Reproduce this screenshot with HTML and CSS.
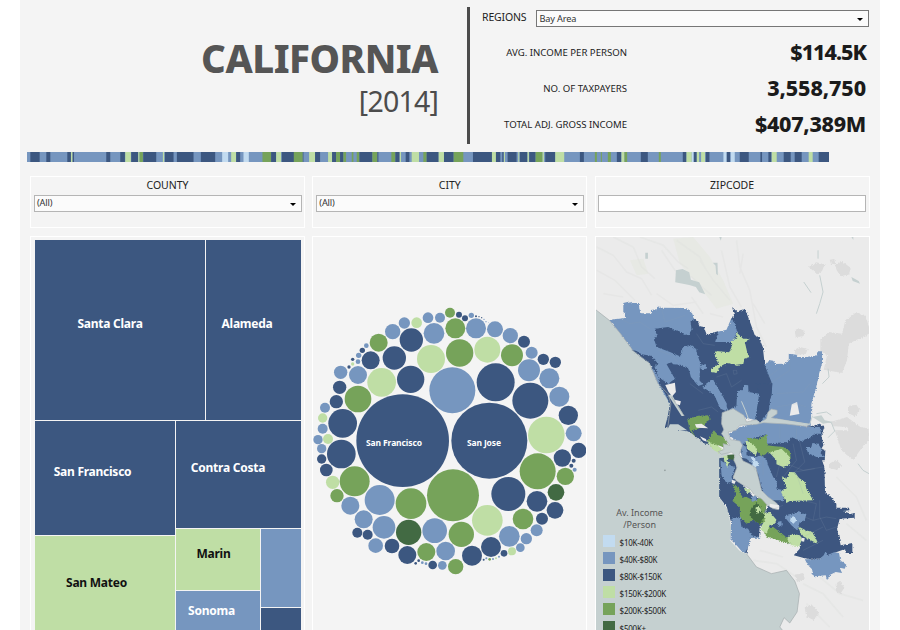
FILE: index.html
```html
<!DOCTYPE html>
<html lang="en">
<head>
<meta charset="utf-8">
<title>California income 2014</title>
<link rel="stylesheet" href="styles.css">
</head>
<body>
<main class="dashboard">
  <header class="header">
    <div class="title">
      <h1>CALIFORNIA</h1>
      <p>[2014]</p>
    </div>
    <div class="summary">
      <div class="region"><span class="region-label">REGIONS</span><div class="select select-dark">Bay Area</div></div>
      <dl class="stats">
        <div class="stat"><dt>AVG. INCOME PER PERSON</dt><dd class="average">$114.5K</dd></div>
        <div class="stat"><dt>NO. OF TAXPAYERS</dt><dd class="taxpayers">3,558,750</dd></div>
        <div class="stat"><dt>TOTAL ADJ. GROSS INCOME</dt><dd class="total">$407,389M</dd></div>
      </dl>
    </div>
  </header>

  <svg class="stripe" id="stripe" viewBox="20 0 2408 30" preserveAspectRatio="none"></svg>

  <section class="columns filters">
    <div class="panel filter"><h2>COUNTY</h2><div class="select">(All)</div></div>
    <div class="panel filter"><h2>CITY</h2><div class="select">(All)</div></div>
    <div class="panel filter"><h2>ZIPCODE</h2><div class="select input"></div></div>
  </section>

  <section class="columns charts">
    <div class="panel treemap">
      <div class="row row-top">
        <div class="tile dark santa-clara"><span>Santa Clara</span></div>
        <div class="tile dark grow alameda"><span>Alameda</span></div>
      </div>
      <div class="row grow">
        <div class="col col-left">
          <div class="tile dark san-francisco"><span>San Francisco</span></div>
          <div class="tile light grow san-mateo"><span>San Mateo</span></div>
        </div>
        <div class="col grow">
          <div class="tile dark contra-costa"><span>Contra Costa</span></div>
          <div class="row grow">
            <div class="col col-small">
              <div class="tile light marin"><span>Marin</span></div>
              <div class="tile mid grow sonoma"><span>Sonoma</span></div>
            </div>
            <div class="col grow">
              <div class="tile mid solano"></div>
              <div class="tile dark grow"></div>
            </div>
          </div>
        </div>
      </div>
    </div>

    <div class="panel bubbles">
      <svg viewBox="313 237 273 393" width="273" height="393">
        <g id="bubbles" transform="translate(310 300) scale(.333333)"></g>
        <text x="394" y="445.5" textLength="56">San Francisco</text>
        <text x="484" y="445.5" textLength="34">San Jose</text>
      </svg>
    </div>

    <div class="panel map">
      <svg viewBox="18 20 820 1179" width="273" height="393" preserveAspectRatio="none">
        <defs>
          <filter id="ragged" x="-2%" y="-2%" width="104%" height="104%">
            <feTurbulence type="turbulence" baseFrequency=".16" numOctaves="2" seed="4"/>
            <feDisplacementMap in="SourceGraphic" scale="4" xChannelSelector="R" yChannelSelector="G"/>
          </filter>
        </defs>
        <rect x="0" y="0" width="860" height="1220" fill="#ebebeb"/>
        <!-- relief shading -->
        <g fill="#e5e7df" opacity=".6"><path d="M250 25L310 20 360 80 400 150 430 220 380 235 330 170 270 100zM120 90L160 85 175 130 140 135z"/></g>
        <g class="relief">
          <path d="M20 50l50 25 40 50 45 20 30 50M70 20l60 30 25 60 40 35M20 120l55 30 60 60M150 20l70 25 45 50 30 20M215 60l40 60 50 20 60 55M40 190l60 10M200 190l50 35 70-10M330 90l40 60 50 60M395 60l25 110 35 60M440 30l10 80 30 70 20 110 30 60M460 70l-10 60M260 30l70 50 20 40M360 250l40 10M305 200l35 50M490 220l35 60"/>
          <path d="M510 960l70 20M490 990l70 10 60 40M640 1060l60 30 60 70M690 1040l60 50 70 20M740 740l60 60 30 70M650 1120l70 70M770 880l60 50"/>
        </g>
        <g fill="#dcdcdc" filter="url(#ragged)">
          <path d="M655 108l25-12 25 6-8 20-15 10zM720 88l14-2 2 12-12 4zM735 100l20-8 28 20-5 20-25 6-12-18zM615 300l12-6 18 8-5 16-22 2zM612 360l18-10 24 6-6 15-30 2z"/>
          <path d="M692 325L717 305 757 310 767 270 797 245 827 255 838 290 838 310 777 340 772 390 757 428 702 418 712 375 692 360z"/>
          <path d="M775 527l25-4 10 15-15 20-20-10zM722 575L772 560 812 590 837 595 837 630 812 650 797 625 772 590 730 588zM735 600L805 600 825 640 790 690 755 660zM718 700L740 688 755 703 740 718 718 713zM614 1033L640 1028 645 1045 622 1055zM738 1060l12-8 14 20-12 18-14-8zM645 1130l20-8 22 25-15 22-22-10z"/>
        </g>
        <g class="water">
          <path d="M10 238L17 238 58 270 90 308 130 362 178 398 204 460 234 490 243 520 233 595 290 595 345 635 395 660 430 675 430 740 388 800 415 840 425 900 420 930 450 962 470 970 500 1010 545 1030 590 1020 615 1052 629 1090 622 1145 600 1178 583 1162 570 1190 582 1204 10 1204z"/>
          <path d="M258 120L278 116 298 126 303 148 328 156 346 192 328 186 318 170 298 164 256 156zM166 67h8v18h-8zM387 17h9l-3 14zM369 97h14l1 38-5-4-2-25zM783 17h8v12zM785 140l22 12 4 8-22-8zM668 560L695 555 705 570 730 575 700 580z"/>
        </g>
        <path class="river" d="M685 60v25M690 135l10 50-10 35-10 30M642 155l22 32M715 415l3 25-20 20M680 550l30-5 15 10M700 572l25 5 10 25-20 20M805 700l15 20 18 10"/>

        <g filter="url(#ragged)">
        <!-- northern counties -->
        <polygon class="m-mid" points="57,268 105,263 105,249 100,245 100,218 122,213 127,218 146,218 151,249 183,249 183,239 199,237 204,226 213,232 285,233 305,244 314,268 330,286 350,312 410,298 425,262 520,390 527,402 537,389 550,391 557,401 580,400 597,388 597,370 620,373 625,380 650,380 680,375 684,363 697,363 697,398 688,430 680,468 665,520 663,588 600,578 515,574 460,560 395,600 290,600 235,590 240,520 204,460 178,398 130,362 90,308"/>
        <polygon class="m-dark" points="302,272 314,266 325,276 330,288 342,290 350,312 385,303 376,335 415,335 430,335 441,300 432,275 424,268 432,250 427,230 440,243 465,236 475,260 486,290 495,315 507,320 519,350 525,405 535,430 547,460 545,495 540,510 537,540 520,560 510,575 497,565 508,490 476,485 475,465 462,463 458,480 442,478 440,525 415,540 398,500 368,445 340,468 328,468 330,395 317,355 303,345 283,348 275,358 270,378 240,365 200,350 192,325 200,312 194,295 235,290 265,303 295,315 305,298"/>
        <polygon class="m-dark" points="125,358 140,362 155,372 182,376 205,400 193,404 205,440 235,460 255,445 230,402 243,395 250,402 275,404 303,415 325,462 370,490 412,540 395,560 402,600 400,640 345,640 300,605 225,590 233,560 240,520 226,490 208,462 205,440 178,398 150,378 130,362"/>
        <polygon class="m-mid" points="275,358 283,348 300,344 307,357 319,355 321,380 330,395 328,450 340,462 325,467 303,440 295,410 272,393"/>
        <polygon class="m-mid" points="328,403 345,402 351,415 333,417"/>
        <polygon class="m-mid" points="368,446 342,466 374,496 392,535 408,542 411,520 400,500"/>
        <polygon class="m-light" points="438,304 460,325 480,325 465,335 472,365 479,380 463,385 461,400 441,403 410,398 388,410 380,428 362,425 363,416 385,400 373,370 378,362 418,366 425,350 423,332 440,320"/>
        <polygon class="m-dark" points="498,458 548,459 545,493 540,510 535,545 510,575 496,565 510,500"/>

        <!-- east bay and south bay -->
        <polygon class="m-dark" points="430,600 663,588 690,580 704,590 695,615 701,645 695,655 707,660 705,690 697,690 704,710 706,785 720,795 740,820 740,832 779,832 779,840 760,842 782,850 795,848 795,862 750,865 742,895 753,945 788,938 788,968 768,968 766,956 700,980 690,985 650,985 612,975 630,955 630,942 600,940 540,915 510,885 525,850 540,810 515,790 490,720 455,670"/>
        <polygon class="m-dark" points="388,684 430,676 442,716 430,742 460,765 480,785 500,800 530,820 525,855 510,880 508,920 480,922 470,970 425,930 425,880 411,830 388,800"/>
        <polygon class="m-mid" points="415,612 450,590 520,572 600,575 650,590 690,590 695,610 670,610 660,620 635,633 605,620 590,635 530,640 525,612 500,620 478,625 455,645"/>
        <polygon class="m-mid" points="455,640 470,650 470,675 500,680 510,675 530,685 535,705 550,740 562,755 560,775 583,780 580,810 540,810 520,800 515,770 505,730 480,695 455,680"/>
        <polygon class="m-mid" points="648,650 665,650 668,638 685,640 695,655 693,670 707,680 680,680 655,668"/>
        <polygon class="m-mid" points="392,690 410,702 435,710 425,740 430,752 410,758 395,735"/>
        <polygon class="m-mid" points="425,862 450,860 455,890 475,895 485,915 508,920 508,922 480,922 475,950 465,968 455,962 440,945 422,925"/>
        <polygon class="m-mid" points="580,855 605,850 628,842 635,850 650,850 645,870 630,875 622,900 605,885"/>
        <polygon class="m-mid" points="645,987 690,985 702,975 708,962 712,975 733,966 748,968 752,990 770,1003 765,1015 750,1012 757,1028 738,1025 720,1034 712,1050 708,1035 675,1038 665,1030 670,1020 655,1005"/>
        <polygon class="m-green" points="292,565 325,556 357,555 359,568 348,575 342,590 305,600 318,622 300,600"/>
        <polygon class="m-green" points="358,620 372,600 385,615 400,618 418,650 405,652 385,645 370,655 350,630"/>
        <polygon class="m-green" points="470,622 505,625 530,611 532,645 555,648 580,650 600,662 603,685 590,690 570,670 540,668 532,677 515,678 495,655"/>
        <polygon class="m-green" points="428,762 447,770 452,790 470,800 490,810 520,800 531,822 522,850 530,875 510,880 490,868 470,880 450,860 450,830 428,812 437,790"/>
        <polygon class="m-green" points="522,890 550,890 570,905 602,930 600,940 525,917"/>
        <polygon class="m-light" points="466,628 480,636 495,645 502,665 498,675 472,655"/>
        <polygon class="m-light" points="538,666 575,655 600,680 598,702 580,710 560,702 560,690"/>
        <polygon class="m-light" points="576,738 590,745 598,725 615,726 628,743 645,755 650,775 670,810 600,812 590,818 574,785 588,770"/>
        <polygon class="m-light" points="350,630 385,647 402,660 392,670 372,660"/>
        <polygon class="m-light" points="462,772 480,776 482,785 470,790"/>
        <polygon class="m-light" points="520,847 540,845 560,868 555,880 540,883 530,910 510,895 525,870"/>
        <polygon class="m-light" points="625,888 648,900 668,905 684,940 660,928 635,915"/>
        <polygon class="m-light" points="590,920 605,910 630,915 638,925 628,948 605,945 597,935"/>
        <polygon class="m-light" points="400,677 420,675 418,695 412,710 404,695"/>
        <polygon class="m-dark" points="410,690 425,680 435,695 422,702"/>
        <polygon class="m-dark" points="452,770 465,785 480,790 460,802 448,785"/>
        <polygon class="m-forest" points="478,850 485,832 500,815 512,828 510,840 525,855 510,880 490,868"/>
        <polygon class="m-forest" points="412,675 434,672 433,688 415,685"/>
        <polygon class="m-light" points="497,832 507,826 512,840 500,848"/>
        <polygon class="m-pale" points="483,680 495,681 498,693 509,698 495,714 483,710 490,700"/>
        <polygon class="m-pale" points="603,860 613,858 621,870 611,880 601,872"/>
        <polygon class="m-dark" points="448,680 470,685 484,697 476,703 450,690"/>
        <polygon class="m-dark" points="515,675 535,665 542,675 530,685"/>
        <polygon class="m-mid" points="482,800 500,795 500,808 488,815"/>
        <polygon class="m-mid" points="562,875 575,872 576,885 566,890"/>
        </g>

        <!-- bays -->
        <polygon class="water shore" points="397,547 430,535 462,555 470,575 500,568 510,578 530,565 535,545 545,536 562,540 562,550 545,562 600,572 660,582 650,588 590,581 520,577 500,582 450,585 438,600 415,605 422,628 450,632 458,645 448,672 460,692 478,700 498,712 508,750 515,780 535,800 560,818 568,828 566,838 550,835 530,822 515,805 495,795 480,775 462,765 440,752 430,740 442,710 432,690 435,675 425,665 395,672 385,664 402,658 400,640 420,645 410,630 395,610 402,598 395,580"/>
        <path class="river" d="M455 513l12 28 10 28M515 575l45-8 100 15 8-25"/>
        <polygon class="water" points="235,495 275,557 283,557 245,492"/>
        <polygon class="water" points="240,582 265,582 292,600 232,600"/>
        <g fill="#ebebeb">
          <path d="M226 464L255 457 258 485 247 498 236 485zM255 508l18 5-3 12-12-4zM600 556L606 522 622 515 629 551zM315 582L335 580 355 594 320 592zM330 618l18 8 3 8-12-4zM540 820l28 5v12l-28-7zM426 748l12 4-4 9-8-3zM480 787l16 6-6 6zM635 922l10 2-2 10-8-2z"/>
        </g>
        <path class="zip-lines" d="M100 270l20 10 30-5 30 20M215 235l10 40 60-20M205 360l40 15 20 20M320 310l20 30 35 5M380 440l30-10 15 40 30-20M325 540l40-10 20 15M300 460l40 30M535 440l40-30 30-30M560 490l80-5 25-30M540 460l60-40v-25M560 530l60-10 30 10M430 420l10 0 2 10-10 2zM610 640l10 50-40 50M630 635l15 60-30 30 60-10M590 700l50 20 60-10M640 810l40 10-10 50-50-20M670 870l40-10 30 5M690 810v50l20 40 30-10M500 610l30 20M570 585v40M620 590v40M520 690v45M570 700l-10 40M480 680l15 40M640 920l60-30M620 730l20 60M540 840l40-15M640 960l60-30"/>
        <path class="coast" d="M17 238L58 270 90 308 130 362 178 398 204 460 234 490 243 520 233 595M245 500L283 557M470 970L500 1010 545 1030 590 1020 615 1052 629 1090 622 1145 600 1178 583 1162 570 1190 582 1204"/>
        <circle cx="225" cy="720" r="2.5" fill="#8e9898"/>
      </svg>
      <div class="legend">
        <p>Av. Income<br>/Person</p>
        <ul>
          <li><i class="pale"></i>$10K-40K</li>
          <li><i class="mid"></i>$40K-$80K</li>
          <li><i class="dark"></i>$80K-$150K</li>
          <li><i class="light"></i>$150K-$200K</li>
          <li><i class="green"></i>$200K-$500K</li>
          <li><i class="forest"></i>$500K+</li>
        </ul>
      </div>
    </div>
  </section>
</main>
<script src="charts.js"></script>
</body>
</html>
```
FILE: styles.css
```css
* { box-sizing: border-box; margin: 0; padding: 0; }
body { background: #fff; font-family: "Noto Sans", sans-serif; color: #222; overflow: hidden; }
.dashboard { width: 860px; height: 630px; margin-left: 20px; background: #f4f4f4; overflow: hidden; }
.header { display: flex; height: 152px; padding-top: 7px; }
.title { width: 450px; height: 137px; padding: 26px 29px 0 0; border-right: 3px solid #4b4b4b; text-align: right; color: #555; }
.title h1 { font-size: 38.5px; line-height: 50px; font-weight: 800; letter-spacing: -.5px; }
.title p { font-size: 28.5px; line-height: 36px; color: #4c4c4c; letter-spacing: -.8px; }
.summary { width: 399px; padding: 3px 0 0 12px; }
.region { display: flex; height: 17px; justify-content: space-between; }
.region-label { font-size: 10.5px; line-height: 15px; letter-spacing: -.15px; }
.region .select { width: 333px; height: 17px; line-height: 15px; }
.select { position: relative; height: 17px; padding-left: 2.5px; background: #fbfbfb; border: 1px solid #b5b5b5; font-size: 9.2px; line-height: 14px; letter-spacing: -.15px; color: #333; }
.select-dark { border-color: #777; }
.select::after { content: ""; position: absolute; right: 5px; top: 7px; border: 3px solid transparent; border-top: 3.5px solid #000; border-bottom: 0; }
.input { background: #fff; }
.input::after { display: none; }
.stats { padding-top: 7px; }
.stat { display: flex; height: 36px; align-items: center; }
.stat dt { width: 146px; padding-right: 1px; text-align: right; font-size: 9.6px; white-space: nowrap; }
.stat dd { flex: 1; padding: 0 3px 2px 0; text-align: right; font-size: 21.5px; font-weight: 800; color: #1b1b1b; }
.average { letter-spacing: -1px; }
.taxpayers { letter-spacing: -.1px; }
.total { letter-spacing: -.3px; }
.stripe { display: block; width: 802px; height: 10px; margin-left: 7px; }
.columns { display: grid; grid-template-columns: repeat(3, 275px); gap: 7.3px; margin-left: 10px; }
.panel { border: 1px solid #fff; }
.filters { margin-top: 14px; }
.filter { height: 52px; padding: 1px 2.5px 0; }
.filter h2 { font-size: 10.5px; line-height: 15px; height: 17px; font-weight: 400; text-align: center; }
.charts { margin-top: 8px; height: 396px; }
.treemap { padding: 3px 3px 0 4px; display: flex; flex-direction: column; gap: 1px; }
.row { display: flex; gap: 1px; min-height: 0; }
.col { display: flex; flex-direction: column; gap: 1px; min-height: 0; min-width: 0; }
.grow { flex: 1; }
.row-top { height: 180px; }
.col-left { width: 140px; }
.col-small { width: 84px; }
.tile { display: flex; align-items: center; justify-content: center; font-size: 12px; font-weight: 700; letter-spacing: -.25px; color: #fff; white-space: nowrap; }
.dark { background: #3c5780; }
.mid { background: #7696bf; }
.light { background: #bfdea5; }
.green { background: #76a35a; }
.forest { background: #426a43; }
.pale { background: #c2dbf0; }
.tile.light { color: #111; }
.santa-clara { width: 170px; padding: 0 20px 13px 0; }
.alameda { padding: 0 13px 13px 0; }
.san-francisco { height: 114px; padding: 0 25px 14px 0; }
.san-mateo { align-items: flex-start; padding: 38px 17px 0 0; }
.contra-costa { height: 107px; padding: 0 21px 14px 0; }
.marin { height: 61px; padding: 0 9px 13px 0; }
.sonoma { align-items: flex-start; padding: 11px 13px 0 0; }
.solano { height: 78px; }
.bubbles svg, .map svg { display: block; }
.bubbles text { font-size: 8.5px; font-weight: 700; fill: #fff; text-anchor: middle; }
.map { position: relative; }
.m-dark { fill: #3c5780; }
.m-mid { fill: #7696bf; }
.m-light { fill: #bfdea5; }
.m-green { fill: #76a35a; }
.m-forest { fill: #426a43; }
.m-pale { fill: #c2dbf0; }
.water { fill: #c5d0d0; }
.shore { stroke: #a9b1b3; stroke-width: 2; }
.river { fill: none; stroke: #c5d0d0; stroke-width: 3; }
.coast { fill: none; stroke: #a3aaac; stroke-width: 2; }
.relief { fill: none; stroke: #dedfdd; stroke-width: 5; opacity: .35; }
.zip-lines { fill: none; stroke: #8e9bb2; stroke-width: 2; opacity: .25; }
.legend { position: absolute; left: 7px; top: 270px; }
.legend p { width: 74px; text-align: center; font-size: 9px; line-height: 12px; color: #555; }
.legend ul { margin-top: 3px; list-style: none; }
.legend li { display: flex; align-items: center; gap: 5px; height: 17.1px; font-size: 8px; letter-spacing: -.25px; color: #222; white-space: nowrap; }
.legend i { width: 12px; height: 12px; margin-bottom: 3px; }
```
FILE: charts.js
```js
const NS = 'http://www.w3.org/2000/svg';
const COLORS = { d: '#3c5780', m: '#7696bf', l: '#bfdea5', g: '#76a35a', f: '#426a43', p: '#c2dbf0' };

function add(parent, tag, attrs) {
  const el = document.createElementNS(NS, tag);
  for (const key in attrs) el.setAttribute(key, attrs[key]);
  parent.appendChild(el);
}

// Stripe: color, start, end; gaps keep the base blue.
const STRIPES = [
  [0, 'd30 58 d78 90 d141 152 l152 157 d157 161 d258 270 d300 314 l315 332 d333 354 l354 358 g358 368 d369 408 l428 432 d434 460 d470 520 d542 585 p606 624 l633 648 d648 660 p670 686 g727 753 d753 768 l768 783 d785 822'],
  [810, 'g11 38 d38 40 l57 75 d75 90 l114 126 d126 138 g138 150 d150 160 g160 168 g185 190 g200 208 d208 247 g247 262 d262 265 g304 316 d316 329 l329 333 d347 358 l365 387 g400 410 d410 446 l446 462 d462 491 g491 520 d549 606 l606 618 d618 631 d637 641 l642 645 d653 680 l685 688 d690 712 l713 717 d718 737 g737 758 l758 762 d766 796 l796 823'],
  [1620, 'd60 72 g105 111 g123 126 g144 153 d171 184 l185 194 g194 202 d243 264 g297 303 d369 380 l380 396 p396 402 d402 411 l411 418 l424 436 d438 449 p491 501 d501 511 p513 525 d540 567 d602 607 d626 635 l636 651 d672 693 d705 726 l747 759 d777 808']
];
const stripe = document.getElementById('stripe');
add(stripe, 'rect', { x: 20, y: 0, width: 2408, height: 30, fill: COLORS.m });
for (const [offset, data] of STRIPES) {
  for (const [, c, a, b] of data.matchAll(/([a-z])(\d+) (\d+)/g)) {
    add(stripe, 'rect', { x: offset + +a, y: 0, width: b - a, height: 30, fill: COLORS[c] });
  }
}

// Bubbles by quadrant: color, cx, cy, r.
const BUBBLES = [
  [0, 0, 'm92,217,20 d89,262,20 d79,305,20 m144,225,27 g144,297,40 m45,323,15 l38,354,14 m38,386,15 d98,370,43 m24,419,14 l54,417,15 d182,181,27 d253,174,35 l215,247,43 d302,238,41 d304,120,35 l363,177,42 m372,100,31 m248,95,23 m283,69,17 l320,68,16 m354,53,16 m390,53,15 g206,128,27 m169,137,7 d157,151,8 m146,166,8 m144,185,7 d128,178,5 l128,192,5 d117,201,5 d278,422,139 m427,271,69'],
  [420, 0, 'g0,38,15 g16,85,30 g29,159,41 l112,149,39 d27,44,9 d45,55,9 m64,46,8 d78,49,3 d87,50,2 d95,53,2 m102,58,2 m108,65,2 m115,68,1 m78,85,30 m135,88,24 m181,107,23 g186,166,33 d222,125,18 m245,158,18 d280,178,17 d316,187,17 m237,211,33 d137,247,57 m298,235,30 d241,302,54 m328,290,30 d355,346,29 m371,400,24 l289,405,55 d118,422,114'],
  [0, 420, 'm35,26,14 d35,57,14 d49,90,19 l68,127,20 g81,167,20 d94,42,43 g134,124,45 m209,180,45 m121,197,27 m161,238,27 m222,262,34 g303,191,46 f296,277,38 m374,272,37 g429,166,78 d142,278,15 d173,284,15 m197,317,22 d246,318,22 d292,345,27 d317,370,4 d326,362,4 m337,368,4 m348,371,4 g349,336,27 d368,375,13 m397,376,13 m407,333,28 g437,380,23'],
  [420, 420, 'g34,283,38 l112,241,46 d175,162,51 g263,94,54 d337,54,26 d386,31,23 d371,62,6 d364,77,6 m374,89,6 g346,109,26 f318,157,25 d261,184,31 d315,211,25 d276,236,18 g219,237,31 m260,271,18 m229,296,17 m178,289,31 m211,323,13 l186,334,12 d162,340,10 d123,321,30 d66,347,30 d101,359,3 m109,355,3 g119,358,4 m129,357,3 l138,355,3 m147,350,3']
];
const bubbles = document.getElementById('bubbles');
for (const [dx, dy, data] of BUBBLES) {
  for (const [, c, x, y, r] of data.matchAll(/([a-z])(\d+),(\d+),(\d+)/g)) {
    add(bubbles, 'circle', { cx: dx + +x, cy: dy + +y, r, fill: COLORS[c] });
  }
}
```
